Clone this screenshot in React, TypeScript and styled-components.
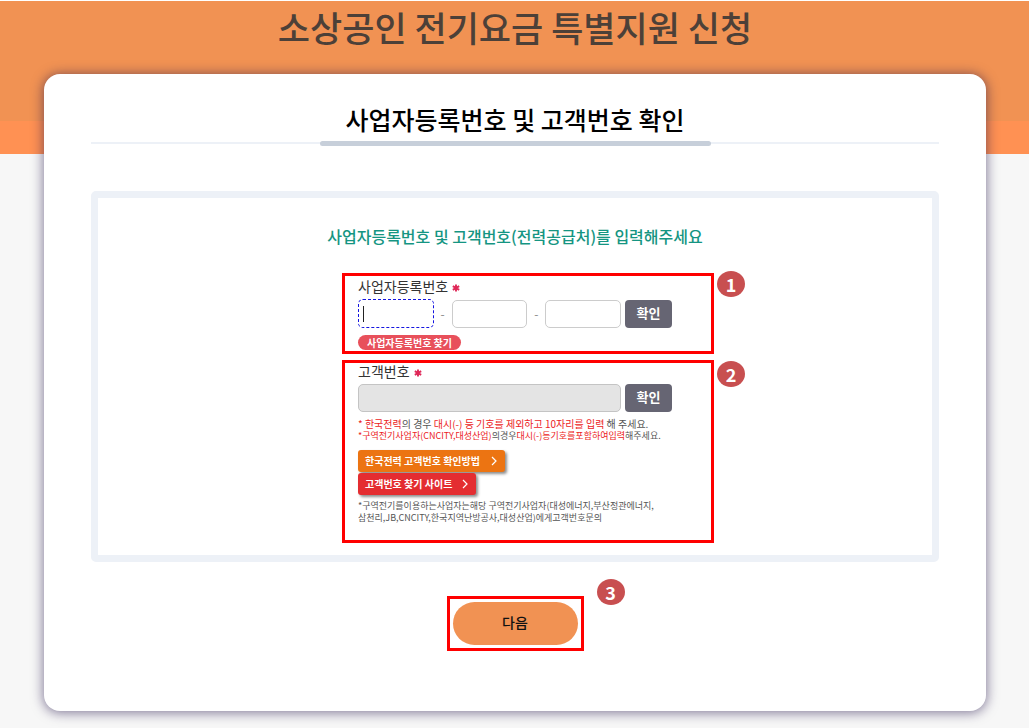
import React from "react";
import styled, { createGlobalStyle } from "styled-components";

const GlobalStyle = createGlobalStyle`
  * { box-sizing: border-box; }
  body {
    margin: 0;
    background: #f7f7f7;
    font-family: "Noto Sans CJK KR", sans-serif;
    color: #333;
  }
  button, input { font-family: inherit; margin: 0; }
  h1, h2, p { margin: 0; }
`;

const Page = styled.div`
  display: flex;
  flex-direction: column;
  min-height: 100vh;
  padding: 1px 43px 17px 44px;
  background: linear-gradient(
    #fff 0 1px,
    #f19253 1px 121px,
    #ff9153 121px 154px,
    #f7f7f7 154px
  );
`;

const PageTitle = styled.h1`
  height: 73px;
  padding-top: 2px;
  font-size: 35px;
  line-height: 48px;
  font-weight: 500;
  text-align: center;
  color: #4c4038;
`;

const Card = styled.main`
  flex: 1;
  padding: 27px 47px 60px;
  border-radius: 16px;
  background: #fff;
  box-shadow: 0 1px 12px 1px rgba(38, 24, 76, 0.55);
`;

const CardHeader = styled.header`
  display: flex;
  justify-content: center;
  height: 45px;
  margin-bottom: 45px;
  background: linear-gradient(#edf1f7, #edf1f7) 0 41px / 100% 2px no-repeat;
`;

const CardTitle = styled.h2`
  min-width: 391px;
  font-size: 25px;
  line-height: 36px;
  font-weight: 500;
  text-align: center;
  color: #000;
  &::after {
    content: "";
    display: block;
    height: 5px;
    margin-top: 4px;
    border-radius: 3px;
    background: #c7cfda;
  }
`;

const Panel = styled.form`
  display: flex;
  flex-direction: column;
  align-items: center;
  padding: 26px 0 12px;
  border: 7px solid #edf1f7;
  border-radius: 5px;
`;

const Guide = styled.p`
  margin-bottom: 25px;
  font-size: 16px;
  line-height: 24px;
  font-weight: 500;
  color: #159582;
`;

const Steps = styled.div`
  display: flex;
  flex-direction: column;
  gap: 6px;
  width: 372px;
  margin-left: 26px;
`;

const Step = styled.section<{ $height: number; $top: number }>`
  position: relative;
  min-height: ${(p) => p.$height}px;
  padding: ${(p) => p.$top}px 39px 0 13px;
  border: 3px solid #ff0000;
`;

const Badge = styled.span<{ $top: number; $right: number }>`
  position: absolute;
  top: ${(p) => p.$top}px;
  right: ${(p) => p.$right}px;
  width: 28px;
  height: 26px;
  border-radius: 50%;
  background: #c84f50;
  color: #fff;
  font-family: "Noto Sans CJK KR", sans-serif;
  font-size: 18px;
  line-height: 26px;
  font-weight: 700;
  text-align: center;
`;

const Label = styled.label`
  display: flex;
  align-items: center;
  gap: 4px;
  font-size: 14px;
  line-height: 16px;
  color: #333;
`;

const RequiredMark = styled.svg`
  width: 8px;
  height: 8px;
  margin-top: 3px;
`;

const Row = styled.div<{ $columns: string }>`
  display: grid;
  grid-template-columns: ${(p) => p.$columns};
  align-items: center;
  gap: 4px;
  margin-top: 5px;
`;

const TextBox = styled.input`
  width: 100%;
  min-width: 0;
  height: 28px;
  padding: 0 6px;
  border: 1px solid #ccc;
  border-radius: 5px;
  background: #fff;
  font-size: 14px;
  outline: none;
  &:disabled { background: #e4e4e4; border-color: #c4c4c4; }
`;

const ActiveField = styled.div`
  display: flex;
  align-items: center;
  min-width: 0;
  height: 29px;
  padding-left: 4px;
  border: 1px dashed #1515e0;
  border-radius: 5px;
  &::before {
    content: "";
    width: 1px;
    height: 16px;
    background: #222;
  }
  input { flex: 1; border: 0; height: 24px; background: transparent; caret-color: transparent; }
`;

const Dash = styled.span`
  font-size: 12px;
  line-height: 20px;
  text-align: center;
  color: #888;
`;

const ConfirmButton = styled.button`
  height: 28px;
  padding: 0 0 2px;
  border: 0;
  border-radius: 4px;
  background: #666573;
  color: #fff;
  font-size: 13px;
  line-height: 26px;
  font-weight: 700;
`;

const FindButton = styled.button`
  display: block;
  width: 103px;
  height: 15px;
  margin-top: 7px;
  padding: 0;
  border: 0;
  border-radius: 8px;
  background: #e8505b;
  color: #fff;
  font-size: 10px;
  line-height: 14px;
  font-weight: 700;
  white-space: nowrap;
`;

const Note = styled.p<{ $size: number }>`
  font-size: ${(p) => p.$size}px;
  line-height: 12px;
  white-space: nowrap;
  color: #555;
`;

const Red = styled.span`
  color: #ec1c24;
`;

const Notes = styled.div`
  margin: 6px 0 8px;
`;

const LinkButton = styled.a<{ $color: string; $width: number }>`
  display: flex;
  align-items: center;
  justify-content: space-between;
  width: ${(p) => p.$width}px;
  height: 22px;
  margin-bottom: 1px;
  padding: 0 8px 0 7px;
  border-radius: 3px;
  background: ${(p) => p.$color};
  box-shadow: 2px 2px 3px rgba(0, 0, 0, 0.45);
  color: #fff;
  font-size: 10px;
  line-height: 22px;
  font-weight: 700;
  text-decoration: none;
  white-space: nowrap;
`;

const FootNotes = styled.div`
  margin-top: 5px;
`;

const NextFrame = styled.div`
  position: relative;
  width: 137px;
  margin: 34px auto 0;
  padding: 3px;
  border: 3px solid #ff0000;
`;

const NextButton = styled.button`
  display: block;
  width: 100%;
  height: 43px;
  padding: 0 0 3px;
  border: 0;
  border-radius: 22px;
  background: #f19253;
  color: #111;
  font-size: 14px;
  line-height: 20px;
  font-weight: 500;
`;

const Required = () => (
  <RequiredMark viewBox="0 0 8 8" aria-hidden="true">
    <path d="M4 0.5v7M0.8 2.2l6.4 3.6M7.2 2.2L0.8 5.8" stroke="#df2858" strokeWidth="1.9" />
  </RequiredMark>
);

const Chevron = () => (
  <svg width="6" height="10" viewBox="0 0 6 10" fill="none" aria-hidden="true">
    <path d="M1 1l4 4-4 4" stroke="#fff" strokeWidth="1.2" />
  </svg>
);

export default function App() {
  return (
    <>
      <GlobalStyle />
      <Page>
        <PageTitle>소상공인 전기요금 특별지원 신청</PageTitle>
        <Card>
          <CardHeader>
            <CardTitle>사업자등록번호 및 고객번호 확인</CardTitle>
          </CardHeader>
          <Panel onSubmit={(e) => e.preventDefault()}>
            <Guide>사업자등록번호 및 고객번호(전력공급처)를 입력해주세요</Guide>
            <Steps>
              <Step $height={81} $top={2}>
                <Badge $top={-5} $right={-34}>1</Badge>
                <Label htmlFor="biz1">
                  사업자등록번호 <Required />
                </Label>
                <Row $columns="1fr 10px 1fr 10px 1fr 47px">
                  <ActiveField>
                    <TextBox id="biz1" />
                  </ActiveField>
                  <Dash>-</Dash>
                  <TextBox aria-label="사업자등록번호 가운데 자리" />
                  <Dash>-</Dash>
                  <TextBox aria-label="사업자등록번호 끝자리" />
                  <ConfirmButton type="button">확인</ConfirmButton>
                </Row>
                <FindButton type="button">사업자등록번호 찾기</FindButton>
              </Step>
              <Step $height={183} $top={0}>
                <Badge $top={-2} $right={-34}>2</Badge>
                <Label htmlFor="customer">
                  고객번호 <Required />
                </Label>
                <Row $columns="1fr 47px">
                  <TextBox id="customer" disabled />
                  <ConfirmButton type="button">확인</ConfirmButton>
                </Row>
                <Notes>
                  <Note $size={10}>
                    <Red>* 한국전력</Red>의 경우 <Red>대시(-) 등 기호를 제외하고 10자리를 입력</Red> 해 주세요.
                  </Note>
                  <Note $size={9}>
                    <Red>*구역전기사업자(CNCITY,대성산업)</Red>의경우<Red>대시(-)등기호를포함하여입력</Red>해주세요.
                  </Note>
                </Notes>
                <LinkButton href="#method" $color="#ec7412" $width={147}>
                  한국전력 고객번호 확인방법 <Chevron />
                </LinkButton>
                <LinkButton href="#sites" $color="#e42d31" $width={118}>
                  고객번호 찾기 사이트 <Chevron />
                </LinkButton>
                <FootNotes>
                  <Note $size={9}>*구역전기를이용하는사업자는해당 구역전기사업자(대성에너지,부산정관에너지,</Note>
                  <Note $size={9}>삼천리,JB,CNCITY,한국지역난방공사,대성산업)에게고객번호문의</Note>
                </FootNotes>
              </Step>
            </Steps>
          </Panel>
          <NextFrame>
            <Badge $top={-20} $right={-44}>3</Badge>
            <NextButton type="button">다음</NextButton>
          </NextFrame>
        </Card>
      </Page>
    </>
  );
}
